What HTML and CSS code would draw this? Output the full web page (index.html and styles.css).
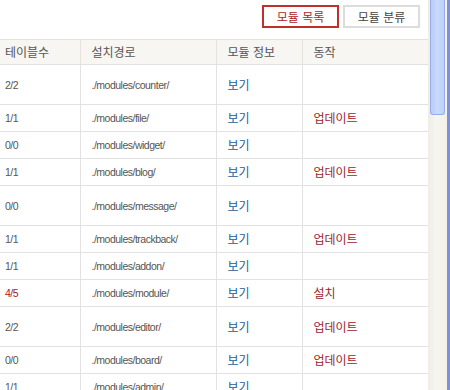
FILE: index.html
```
<!DOCTYPE html>
<html lang="ko">
<head>
<meta charset="utf-8">
<link rel="stylesheet" href="styles.css">
</head>
<body>
<div class="page">
  <main class="content">
    <div class="toolbar">
      <a class="tab tab-active">모듈 목록</a>
      <a class="tab">모듈 분류</a>
    </div>
    <table class="modules">
      <colgroup>
        <col class="c1"><col class="c2"><col class="c3"><col class="c4">
      </colgroup>
      <thead>
        <tr><th class="first">테이블수</th><th>설치경로</th><th>모듈 정보</th><th>동작</th></tr>
      </thead>
      <tbody>
        <tr class="tall"><td class="first num">2/2</td><td class="path">./modules/counter/</td><td><a class="view">보기</a></td><td></td></tr>
        <tr><td class="first num">1/1</td><td class="path">./modules/file/</td><td><a class="view">보기</a></td><td><a class="act">업데이트</a></td></tr>
        <tr><td class="first num">0/0</td><td class="path">./modules/widget/</td><td><a class="view">보기</a></td><td></td></tr>
        <tr><td class="first num">1/1</td><td class="path">./modules/blog/</td><td><a class="view">보기</a></td><td><a class="act">업데이트</a></td></tr>
        <tr class="tall"><td class="first num">0/0</td><td class="path">./modules/message/</td><td><a class="view">보기</a></td><td></td></tr>
        <tr><td class="first num">1/1</td><td class="path">./modules/trackback/</td><td><a class="view">보기</a></td><td><a class="act">업데이트</a></td></tr>
        <tr><td class="first num">1/1</td><td class="path">./modules/addon/</td><td><a class="view">보기</a></td><td></td></tr>
        <tr><td class="first num alert">4/5</td><td class="path">./modules/module/</td><td><a class="view">보기</a></td><td><a class="act">설치</a></td></tr>
        <tr class="tall"><td class="first num">2/2</td><td class="path">./modules/editor/</td><td><a class="view">보기</a></td><td><a class="act">업데이트</a></td></tr>
        <tr><td class="first num">0/0</td><td class="path">./modules/board/</td><td><a class="view">보기</a></td><td><a class="act">업데이트</a></td></tr>
        <tr><td class="first num">1/1</td><td class="path">./modules/admin/</td><td><a class="view">보기</a></td><td></td></tr>
      </tbody>
    </table>
  </main>
  <div class="scrollbar">
    <div class="thumb"></div>
  </div>
</div>
</body>
</html>
```
FILE: styles.css
```
html, body {
  margin: 0;
  padding: 0;
  background: #fff;
}
.page {
  display: flex;
  width: 450px;
  height: 390px;
  overflow: hidden;
}
.content {
  width: 428px;
  flex: none;
  font-family: "Noto Sans CJK KR", "Liberation Sans", sans-serif;
  font-size: 12px;
}
.toolbar {
  height: 39px;
  box-sizing: border-box;
  padding: 5px 8px 0 0;
  display: flex;
  justify-content: flex-end;
  gap: 4px;
}
.tab {
  box-sizing: border-box;
  height: 23px;
  width: 77px;
  border: 2px solid #dcdcdc;
  display: flex;
  align-items: center;
  justify-content: center;
  font-size: 12px;
  color: #444;
  line-height: 1;
}
.tab-active {
  border-color: #c0302a;
  color: #b02424;
}
.modules {
  border-collapse: collapse;
  table-layout: fixed;
  width: 428px;
}
.c1 { width: 80px; }
.c2 { width: 136px; }
.c3 { width: 86px; }
.c4 { width: 126px; }
.modules th {
  height: 24px;
  background: #f7f6f2;
  border-top: 1px solid #e4e2dc;
  border-bottom: 1px solid #e4e2dc;
  border-left: 1px solid #e4e2dc;
  text-align: left;
  font-weight: normal;
  font-size: 12px;
  color: #555;
  padding: 0 0 0 11px;
  line-height: 14px;
}
.modules td {
  height: 26px;
  border-bottom: 1px solid #e2e2e2;
  border-left: 1px solid #e2e2e2;
  padding: 0 0 0 11px;
  vertical-align: middle;
  font-size: 12px;
  line-height: 14px;
}
.modules tr.tall td { height: 39px; }
.modules .first {
  border-left: none;
  padding-left: 5px;
}
.modules td.num, .modules td.path {
  font-family: "Liberation Sans", Arial, sans-serif;
  font-size: 10.5px;
  line-height: 12px;
  letter-spacing: -0.5px;
  color: #555;
}
.modules td.alert { color: #a8201a; }
.view, .act {
  display: block;
  font-size: 12px;
  line-height: 14px;
}
.view { color: #1f5c96; }
.act { color: #a0222a; }
.scrollbar {
  width: 22px;
  flex: none;
  height: 390px;
  box-sizing: border-box;
  background: linear-gradient(to right, #eeece4, #f7f5ef 40%, #f3f1ea);
  border-right: 3px solid #7f90d9;
  padding: 0 2px 0 2px;
}
.thumb {
  height: 115px;
  box-sizing: border-box;
  background: linear-gradient(to right, #b9cdf7, #c8d9fd 50%, #bcd0f8);
  border: 1px solid #95aee6;
  border-top: none;
  border-radius: 0 0 3px 3px;
}
```
